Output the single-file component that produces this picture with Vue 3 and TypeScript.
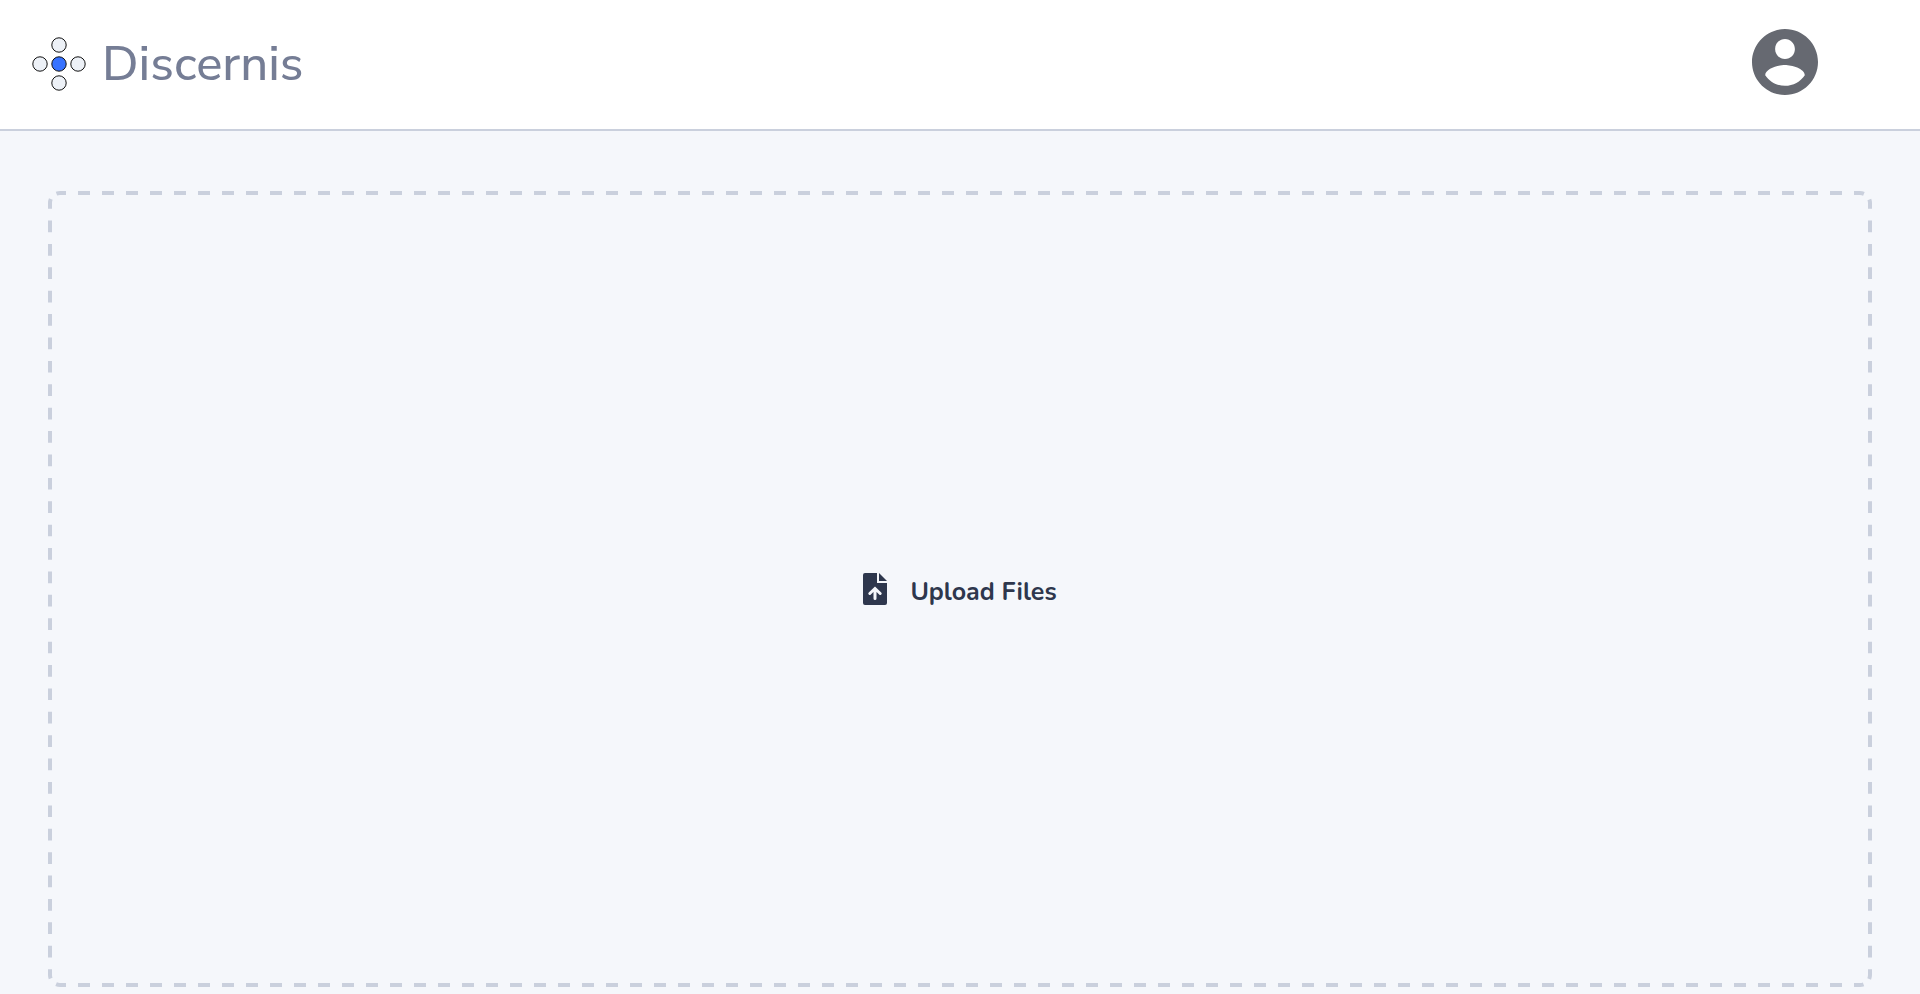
<script setup lang="ts">
import { ref } from 'vue'

interface Dot {
  cx: number
  cy: number
  active: boolean
}

interface Corner {
  x: string
  y: string
  angle: number
}

const dots: Dot[] = [
  { cx: 27, cy: 8, active: false },
  { cx: 8, cy: 27, active: false },
  { cx: 27, cy: 27, active: true },
  { cx: 46, cy: 27, active: false },
  { cx: 27, cy: 46, active: false },
]

const corners: Corner[] = [
  { x: '0', y: '0', angle: 0 },
  { x: '100%', y: '0', angle: 90 },
  { x: '100%', y: '100%', angle: 180 },
  { x: '0', y: '100%', angle: 270 },
]

const picker = ref<HTMLInputElement | null>(null)
const files = ref<File[]>([])

function addFiles(list: FileList | null | undefined): void {
  files.value = list ? Array.from(list) : []
}
</script>

<template>
  <div class="page">
    <header class="topbar">
      <a class="brand" href="#">
        <svg class="brand-mark" viewBox="0 0 54 54" aria-hidden="true">
          <circle
            v-for="(dot, i) in dots"
            :key="i"
            :cx="dot.cx"
            :cy="dot.cy"
            r="7.2"
            :class="dot.active ? 'dot dot-active' : 'dot'"
          />
        </svg>
        <span class="brand-name">Discernis</span>
      </a>
      <button class="account" type="button" aria-label="Account">
        <svg class="account-icon" viewBox="2 2 20 20" aria-hidden="true">
          <path
            d="M12 2C6.48 2 2 6.48 2 12s4.480 10 10 10 10-4.480 10-10S17.520 2 12 2zm0 3c1.660 0 3 1.340 3 3.050s-1.340 3.050-3 3.050-3-1.340-3-3.050S10.340 5 12 5zm0 14.200c-2.500 0-4.710-1.280-6-3.220.030-1.990 4-3.080 6-3.080 1.990 0 5.970 1.090 6 3.080-1.290 1.940-3.500 3.220-6 3.220z"
          />
        </svg>
      </button>
    </header>

    <main class="content">
      <div class="dropzone" @dragover.prevent @drop.prevent="addFiles($event.dataTransfer?.files)">
        <div class="outline" aria-hidden="true">
          <svg class="outline-art">
            <line x1="0" y1="0" x2="100%" y2="0" pathLength="1800" transform="translate(0 -10)" />
            <line x1="0" y1="100%" x2="100%" y2="100%" pathLength="1800" transform="translate(0 10)" />
            <line x1="0" y1="0" x2="0" y2="100%" pathLength="792" transform="translate(-10 0)" />
            <line x1="100%" y1="0" x2="100%" y2="100%" pathLength="792" transform="translate(10 0)" />
            <svg v-for="corner in corners" :key="corner.angle" class="corner" :x="corner.x" :y="corner.y">
              <path d="M-10 0A10 10 0 0 1 0-10" :transform="`rotate(${corner.angle})`" />
            </svg>
          </svg>
        </div>
        <button class="upload" type="button" @click="picker?.click()">
          <svg class="upload-icon" viewBox="0 0 24 32" aria-hidden="true">
            <path d="M2 0H14V10H24V30a2 2 0 0 1-2 2H2a2 2 0 0 1-2-2V2a2 2 0 0 1 2-2z" />
            <path d="M16 0L24 8H16z" />
            <path class="upload-arrow" d="M12 25.500V16M6.800 20.500L12 15.500l5.200 5" />
          </svg>
          <span class="upload-label">Upload Files</span>
        </button>
        <input
          ref="picker"
          type="file"
          multiple
          hidden
          aria-label="Upload Files"
          @change="addFiles(picker?.files)"
        />
      </div>
    </main>
  </div>
</template>

<style>
body {
  background: #f5f7fb;
}
</style>

<style scoped>
.page {
  display: flex;
  flex-direction: column;
  box-sizing: border-box;
  min-height: 100vh;
  background: #f5f7fb;
  font-family: Nunito, Lato, "Open Sans", sans-serif;
}

.topbar {
  display: flex;
  align-items: center;
  justify-content: space-between;
  box-sizing: border-box;
  height: 131px;
  padding: 0 102px 1px 32px;
  border-bottom: 2px solid #cad0dd;
  background: #fff;
}

.brand {
  display: flex;
  align-items: center;
  gap: 16px;
  color: #757d95;
  text-decoration: none;
}

.brand-mark {
  width: 54px;
  height: 54px;
}

.dot {
  fill: #edf1f7;
  stroke: #111;
  stroke-width: 1;
}

.dot-active {
  fill: #3772ff;
}

.brand-name {
  font-family: "Nunito Sans", "Open Sans", sans-serif;
  font-size: 49px;
  font-weight: 500;
  line-height: 60px;
}

.account {
  display: flex;
  padding: 0 0 4px;
  border: 0;
  background: none;
  color: #666971;
  cursor: pointer;
}

.account-icon {
  width: 66px;
  height: 66px;
  fill: currentColor;
}

.content {
  display: flex;
  flex: 1;
  padding: 60px 48px 7px;
}

.dropzone {
  position: relative;
  display: flex;
  flex: 1;
  align-items: center;
  justify-content: center;
}

.outline {
  position: absolute;
  inset: 12px;
  pointer-events: none;
}

.outline-art {
  display: block;
  width: 100%;
  height: 100%;
  overflow: visible;
  fill: none;
  stroke: #cad0dd;
  stroke-width: 4;
}

.outline-art line {
  stroke-dasharray: 12 12;
  stroke-dashoffset: 6;
}

.corner {
  overflow: visible;
}

.corner path {
  stroke-dasharray: 4 8;
}

.upload {
  display: flex;
  align-items: center;
  gap: 23px;
  padding: 0;
  border: 0;
  background: none;
  color: #2e374d;
  font-family: inherit;
  font-size: 25px;
  font-weight: 700;
  line-height: 40px;
  cursor: pointer;
}

.upload-icon {
  width: 24px;
  height: 32px;
  fill: currentColor;
}

.upload-label {
  padding-top: 6px;
}

.upload-arrow {
  fill: none;
  stroke: #f5f7fb;
  stroke-width: 3;
  stroke-linecap: round;
}
</style>
